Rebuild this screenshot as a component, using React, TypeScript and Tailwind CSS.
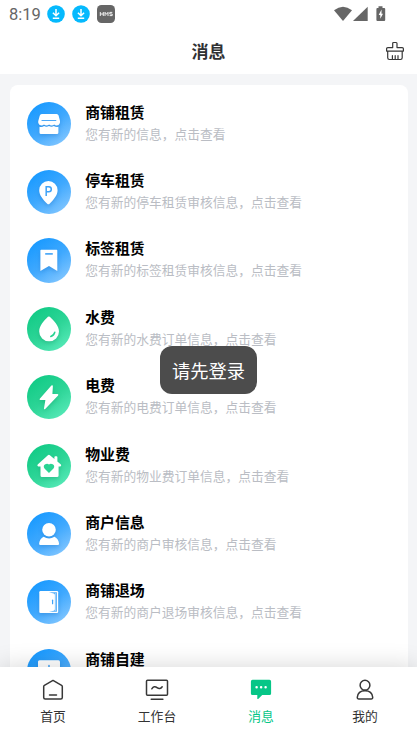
import React from 'react';

type Tone = 'blue' | 'green';

interface MessageItem {
  id: string;
  title: string;
  desc?: string;
  tone: Tone;
  icon: React.ReactNode;
}

const messages: MessageItem[] = [
  {
    id: 'shop',
    title: '商铺租赁',
    desc: '您有新的信息，点击查看',
    tone: 'blue',
    icon: (
      <>
        <path fill="#fff" d="M14.8 12h14.8q1.600 0 2 1.500l1.300 5q.4 1.700-.1 2.700-.8 2.300-3.200 2.300-1.500 0-2.400-1-1 1-2.600 1t-2.500-1q-1 1-2.600 1t-2.500-1q-.9 1-2.400 1-2.400 0-3.200-2.300-.5-1 0-2.700l1.400-5q.4-1.500 2-1.500z" />
        <path fill="#fff" d="M12.500 24.800q2.700.6 4.600-.7 2.300 1.200 4.900 0 2.500 1.200 4.900 0 2 1.300 4.500.7v5.700q0 1.600-1.500 1.600H14q-1.500 0-1.500-1.600z" />
        <path stroke="#4da9f8" strokeWidth="1.200" strokeLinecap="round" d="M15 18.500h13.800" />
      </>
    ),
  },
  {
    id: 'parking',
    title: '停车租赁',
    desc: '您有新的停车租赁审核信息，点击查看',
    tone: 'blue',
    icon: (
      <>
        <path fill="#fff" d="M21.400 11a9.200 9.200 0 0 1 9.200 9.200c0 5-4 9.400-8 13.600q-1.200 1.100-2.400 0c-4-4.200-8-8.600-8-13.600a9.200 9.200 0 0 1 9.200-9.200z" />
        <path fill="none" stroke="#3fa2f7" strokeWidth="1.500" d="M19.200 26v-9.300h2.600q2.500 0 2.500 2.500t-2.500 2.500h-2.600" />
      </>
    ),
  },
  {
    id: 'label',
    title: '标签租赁',
    desc: '您有新的标签租赁审核信息，点击查看',
    tone: 'blue',
    icon: (
      <>
        <path fill="#fff" d="M14.200 11.700h15.400q.7 0 .7.700V33L22 28.100 13.400 33V12.400q0-.7.800-.7z" />
        <path stroke="#3fa2f7" strokeWidth="1.600" d="M18.200 15.900h7.600" />
      </>
    ),
  },
  {
    id: 'water',
    title: '水费',
    desc: '您有新的水费订单信息，点击查看',
    tone: 'green',
    icon: (
      <>
        <path fill="#fff" d="M21 9.800q.9-.8 1.800 0c3.800 3.600 9.200 9 9.200 14.600a9.900 9.900 0 0 1-19.800 0c0-5.600 5-11 8.800-14.600z" />
        <path fill="none" stroke="#27d491" strokeWidth="1.500" strokeLinecap="round" d="M27.800 25.300q-.7 3-4 4.200" />
      </>
    ),
  },
  {
    id: 'power',
    title: '电费',
    desc: '您有新的电费订单信息，点击查看',
    tone: 'green',
    icon: <path fill="#fff" d="M24.400 10.500q1.500-.7 1.500.7l-.5 7.800h5.100q1.400.2.600 1.400L18.200 33.900q-1.400.9-1.200-.7l1.400-8.200h-4.900q-1.500-.2-.7-1.300z" />,
  },
  {
    id: 'property',
    title: '物业费',
    desc: '您有新的物业费订单信息，点击查看',
    tone: 'green',
    icon: (
      <>
        <path fill="#fff" d="M20.900 11.200q1-.8 2 0l4.500 3.700v-1.600q0-1 1-1h1q1 0 1 1v4.200l3.500 3q.9 1.400-.6 1.900h-1.700v9.200q0 1.500-1.500 1.500H15q-1.500 0-1.500-1.500v-9.200h-2.200q-1.600-.5-.6-1.900z" />
        <path fill="#29d493" d="M22 29l-4.500-4.500q-1.800-2.800.8-4.300 2-.8 3.700.2 1.700-1 3.700-.2 2.600 1.500.8 4.300z" />
      </>
    ),
  },
  {
    id: 'merchant',
    title: '商户信息',
    desc: '您有新的商户审核信息，点击查看',
    tone: 'blue',
    icon: (
      <>
        <circle cx="22" cy="17.800" r="6.800" fill="#fff" />
        <path fill="#fff" d="M16.600 24.800q5.400 3.200 10.900 0 4.100 2.100 4.600 7 0 1.200-1.200 1.200H13.300q-1.200 0-1.200-1.200.5-5 4.500-7z" />
      </>
    ),
  },
  {
    id: 'leave',
    title: '商铺退场',
    desc: '您有新的商户退场审核信息，点击查看',
    tone: 'blue',
    icon: (
      <>
        <rect x="12.300" y="11" width="18.900" height="22" rx="1.200" fill="#fff" />
        <path fill="#54aef9" d="M22 12.200h7.900v19.500H22l4.700-1q1.200-.3 1.200-1.500V14.900q0-1.200-1.200-1.500z" />
        <path fill="#b9ddfd" d="M28.300 13h.7v18h-.7z" />
        <path stroke="#3fa2f7" strokeWidth="1.200" strokeLinecap="round" d="M25.600 20.200v3.500" />
      </>
    ),
  },
  {
    id: 'build',
    title: '商铺自建',
    tone: 'blue',
    icon: (
      <>
        <rect x="11" y="11.200" width="22" height="21" rx="1.500" fill="#fff" />
        <path stroke="#3fa2f7" strokeWidth="1.500" strokeLinecap="round" d="M22 16.500v10M17 21.500h10" />
      </>
    ),
  },
];

const gradients: Record<Tone, string> = {
  blue: 'bg-[linear-gradient(145deg,#1c9bff_15%,#40a9fe_52%,#84c7ff_92%)]',
  green: 'bg-[linear-gradient(145deg,#12cb86_12%,#2dd597_52%,#58eab9_92%)]',
};

const shadows: Record<Tone, string> = {
  blue: 'drop-shadow-[0_2px_2px_rgba(0,80,170,0.25)]',
  green: 'drop-shadow-[0_2px_2px_rgba(0,120,75,0.25)]',
};

const MessageRow: React.FC<{ item: MessageItem }> = ({ item }) => (
  <li className="flex h-[68.35px] shrink-0 items-start">
    <div className={`size-[44.2px] shrink-0 rounded-full ${gradients[item.tone]}`}>
      <svg viewBox="0 0 44.2 44.2" className={`size-full ${shadows[item.tone]}`} fill="none">
        {item.icon}
      </svg>
    </div>
    <div className="-mt-px ml-[14.3px] whitespace-nowrap">
      <h2 className="text-[14.9px] leading-[22px] font-bold text-black">{item.title}</h2>
      {item.desc && <p className="text-[12.75px] leading-[22px] text-[#babdc4]">{item.desc}</p>}
    </div>
  </li>
);

const DownloadBadge = () => (
  <svg viewBox="0 0 18 18" className="size-[18px]" fill="none">
    <circle cx="9" cy="9" r="8.800" fill="#05b9fd" />
    <path stroke="#fff" strokeWidth="1.500" d="M9 4v6.500M5.900 7.700L9 10.800l3.100-3.100M5.800 13.200h6.400" />
  </svg>
);

const StatusBar = () => (
  <div className="flex h-7 shrink-0 items-center pl-[9px] text-[#666]">
    <span className="w-[38.2px] pt-px font-[Roboto,sans-serif] text-[16.5px] leading-7">8:19</span>
    <div className="flex items-center gap-[7px]">
      <DownloadBadge />
      <DownloadBadge />
      <svg viewBox="0 0 18 18" className="size-[18px]" fill="none">
        <rect width="18" height="18" rx="4.500" fill="#666" />
        <path stroke="#fff" strokeWidth=".9" d="M3.300 7v4M6.300 7v4M3.300 9h3M8 11V7.300l1.500 2 1.500-2V11M15.300 7.400h-2.500V9h2.400v1.600h-2.600" />
      </svg>
    </div>
    <svg viewBox="0 0 52 16" className="mr-[31.5px] ml-auto h-4 w-[52px]" fill="#666">
      <path d="M0 4.200Q9-2.800 18 4.200L9 15z" />
      <path d="M33.700.8V15H19z" />
      <path d="M44.500.2h4V2h1.700q1 0 1 1v11q0 1-1 1h-6.800q-1 0-1-1V3q0-1 1-1h1.100z" />
      <path fill="#fff" d="M47.500 3.500v4.300H49l-2.700 5V9h-1.600z" />
    </svg>
  </div>
);

const Header = () => (
  <header className="grid h-[46px] shrink-0 grid-cols-[1fr_auto_1fr] items-center">
    <h1 className="col-start-2 text-[17px] leading-6 font-bold text-[#303133]">消息</h1>
    <svg viewBox="0 0 20 20" className="mr-3 size-5 justify-self-end" fill="none" stroke="#383838" strokeWidth="1.200" strokeLinejoin="round" strokeLinecap="round">
      <path d="M7.700 6.600V2.400q0-.9.900-.9h2.500q.9 0 .9.900v4.200h5.200q1.200 0 1.200 1.200v2.300H1.600V7.800q0-1.200 1.200-1.200zM2.700 10.100v6.700q0 1.700 1.700 1.700h11.100q1.700 0 1.700-1.700v-6.700M7.400 14.700v3.500M10.200 14.700v3.500M13 14.700v3.500" />
    </svg>
  </header>
);

const Toast = () => (
  <div className="absolute top-[346px] left-[160px] flex h-12 w-[97px] items-center justify-center rounded-[12px] bg-[#4c4c4c] text-[18.3px] whitespace-nowrap text-white">
    <span className="pt-0.5">请先登录</span>
  </div>
);

const tabs = [
  {
    label: '首页',
    icon: <path d="M3.400 7.300L12 2.400l8.600 4.900q.7.400.7 1.200v11q0 1.500-1.500 1.500H4.200q-1.500 0-1.500-1.500v-11q0-.8.700-1.200zM8.500 17h7" />,
  },
  {
    label: '工作台',
    icon: <path d="M2.500 2.300h19q1 0 1 1v13q0 1-1 1h-19q-1 0-1-1v-13q0-1 1-1zM6.800 10.800q2.300-3.500 5.200-1.200 3 2.300 5.200-.8M6.200 21.300h11.700" />,
  },
  {
    label: '消息',
    active: true,
    icon: (
      <>
        <path fill="#06c687" stroke="none" d="M3.500 1.800h17q1.600 0 1.600 1.600v12q0 1.600-1.600 1.600h-7.300l-4 3.900q-.9.500-.9-.5V17H3.500q-1.600 0-1.600-1.600v-12q0-1.600 1.600-1.600z" />
        <path stroke="#fff" strokeWidth="2.500" d="M7.600 9.300h.01M12.100 9.300h.01M16.600 9.300h.01" />
      </>
    ),
  },
  {
    label: '我的',
    icon: <path d="M12 2.300a4.900 4.900 0 1 1 0 9.800 4.900 4.900 0 0 1 0-9.800zM4.300 19.200c.4-4 3.500-6.500 7.700-6.500s7.300 2.500 7.700 6.500q.1 1.800-1.600 1.800H5.900q-1.700 0-1.600-1.800z" />,
  },
];

const TabBar = () => (
  <nav className="z-10 grid h-[74px] shrink-0 grid-cols-4 bg-white pl-px shadow-[0_0_24px_rgba(0,0,0,0.17)]">
    {tabs.map(tab => (
      <button
        key={tab.label}
        className={`flex flex-col items-center pt-[11px] text-[12.8px] leading-5 ${tab.active ? 'text-[#06c687]' : 'text-[#333]'}`}
      >
        <svg viewBox="0 0 24 24" className="size-6" fill="none" stroke="#383838" strokeWidth="1.500" strokeLinejoin="round" strokeLinecap="round">
          {tab.icon}
        </svg>
        <span className="mt-1">{tab.label}</span>
      </button>
    ))}
  </nav>
);

const App: React.FC = () => {
  return (
    <div className="relative flex h-screen w-full flex-col overflow-hidden bg-white font-['Noto_Sans_CJK_SC',sans-serif]">
      <StatusBar />
      <Header />
      <main className="min-h-0 flex-1 overflow-hidden bg-[#f4f5f7] pt-[10.5px] pr-[9px] pl-[10px]">
        <ul className="rounded-lg bg-white pt-[17.3px] pl-[16.7px]">
          {messages.map(item => (
            <MessageRow key={item.id} item={item} />
          ))}
        </ul>
      </main>
      <TabBar />
      <Toast />
    </div>
  );
};

export default App;
